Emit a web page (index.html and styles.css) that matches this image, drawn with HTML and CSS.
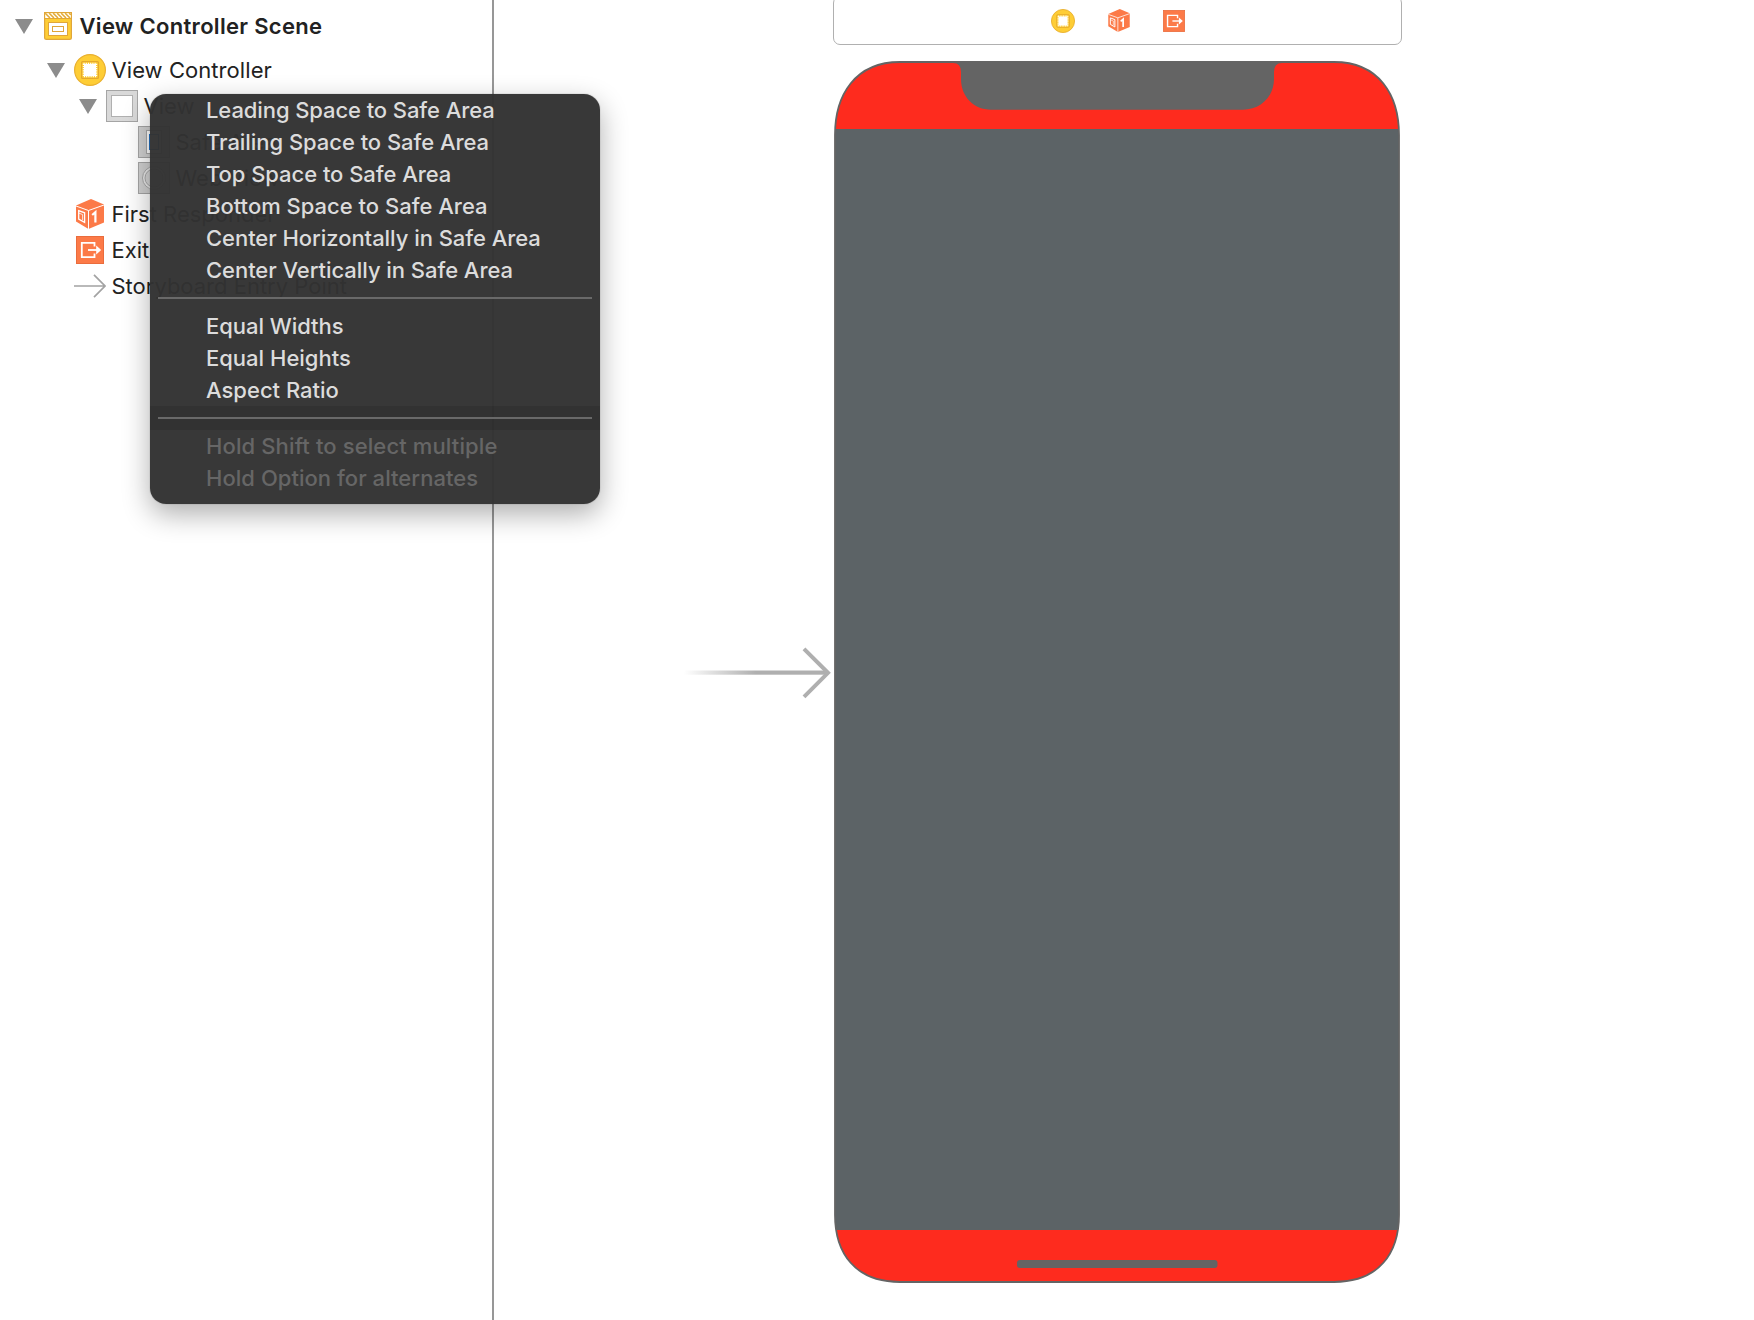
FILE: index.html
```html
<!DOCTYPE html>
<html lang="en">
<head>
<meta charset="utf-8">
<title>View Controller Scene</title>
<link rel="stylesheet" href="styles.css">
</head>
<body>
<svg class="defs" width="0" height="0" aria-hidden="true">
  <symbol id="triangle" viewBox="0 0 18 15"><path d="M0 0H18L9 15Z" fill="#8c8c8c"/></symbol>
  <symbol id="controller" viewBox="0 0 32 32">
    <circle cx="16" cy="16" r="15.4" fill="#fecd35" stroke="#e9b030" stroke-width="1.2"/>
    <rect x="7.6" y="7.6" width="16.8" height="16.8" rx="1" fill="#fecd35" stroke="#e5a92c" stroke-width="1.2"/>
    <rect x="10" y="10" width="12" height="12" fill="#fff"/>
    <rect x="9.5" y="9.5" width="13" height="13" fill="none" stroke="#fff" stroke-width="1.4" stroke-dasharray="1.2 1"/>
  </symbol>
  <symbol id="responder" viewBox="0 0 28 30">
    <path d="M15 0L28 5.5V23.5L12.5 30L0 22.5V6.5Z" fill="#fc7a48"/>
    <path d="M0 7L12.5 11.5L28 6M12.5 11.5V30" fill="none" stroke="#fff" stroke-width="1"/>
    <path d="M2.7 11.6L8.6 13.8V23.4L2.7 20Z" fill="none" stroke="#fff" stroke-width="1.3"/>
    <path d="M2.7 14L6.6 15.6V21" fill="none" stroke="#fff" stroke-width=".8"/>
    <path d="M16.2 16L19.4 13.2V23.5" fill="none" stroke="#fff" stroke-width="2.2"/>
  </symbol>
  <symbol id="exit" viewBox="0 0 28 28">
    <rect x=".5" y=".5" width="27" height="27" fill="#fc7a48" stroke="#ea6c3d"/>
    <path d="M18.5 10.5V6.8H5.8V21.2H18.5V17.5" fill="none" stroke="#fff" stroke-width="1.8"/>
    <path d="M12 14H21" stroke="#fff" stroke-width="1.8"/>
    <path d="M20.2 9.5L25.2 14L20.2 18.5Z" fill="#fff"/>
  </symbol>
</svg>
<div class="editor">
  <aside class="outline">
    <div class="row scene">
      <svg class="tri"><use href="#triangle"/></svg>
      <svg class="icon-scene" viewBox="0 0 28 28">
        <path d="M.6 .6H27.4V25.5Q27.4 27.4 25.5 27.4H2.5Q.6 27.4 .6 25.5Z" fill="#fecd35" stroke="#e0a63a" stroke-width="1.2"/>
        <path d="M1.2 1.2H26.8V6H1.2Z" fill="#fff"/>
        <path d="M1.2 1.2L6 6M5.2 1.2L10 6M9.2 1.2L14 6M13.2 1.2L18 6M17.2 1.2L22 6M21.2 1.2L26 6M25.2 1.2L26.8 2.8" stroke="#e3aa35" stroke-width="1.6"/>
        <path d="M.6 6.5H27.4" stroke="#e0a63a" stroke-width="1"/>
        <rect x="4.5" y="10.5" width="19" height="13" fill="#fff" stroke="#e0a63a"/>
        <rect x="8.5" y="14.5" width="11" height="5" fill="#fff" stroke="#e0a63a"/>
      </svg>
      <span class="label">View Controller Scene</span>
    </div>
    <div class="row level-1">
      <svg class="tri"><use href="#triangle"/></svg>
      <svg class="icon"><use href="#controller"/></svg>
      <span class="label">View Controller</span>
    </div>
    <div class="row level-2">
      <svg class="tri"><use href="#triangle"/></svg>
      <svg class="icon" viewBox="0 0 32 32"><rect x=".5" y=".5" width="31" height="31" fill="#d9d9d9" stroke="#a5a5a5"/><rect x="5.5" y="5.5" width="21" height="21" fill="#fff" stroke="#b0b0b0"/></svg>
      <span class="label">View</span>
    </div>
    <div class="row level-3">
      <svg class="icon" viewBox="0 0 32 32"><rect x=".5" y=".5" width="31" height="31" fill="#d0d0d0" stroke="#a5a5a5"/><rect x="8.5" y="4.5" width="15" height="23" fill="#fff" stroke="#a8a8a8"/><rect x="11.5" y="8.5" width="9" height="15" fill="#fff" stroke="#2474c8"/></svg>
      <span class="label">Safe Area</span>
    </div>
    <div class="row level-3">
      <svg class="icon" viewBox="0 0 32 32"><rect x=".5" y=".5" width="31" height="31" fill="#d0d0d0" stroke="#a5a5a5"/><circle cx="16" cy="16" r="11.5" fill="#e8e8e8" stroke="#a8a8a8"/><circle cx="16" cy="16" r="9" fill="#d4d4d4" stroke="#a8a8a8"/></svg>
      <span class="label">Web View</span>
    </div>
    <div class="row level-1b">
      <svg class="icon-cube"><use href="#responder"/></svg>
      <span class="label">First Responder</span>
    </div>
    <div class="row level-1b">
      <svg class="icon-exit"><use href="#exit"/></svg>
      <span class="label">Exit</span>
    </div>
    <div class="row entry">
      <svg class="icon" viewBox="0 0 32 32"><path d="M0 16H30.5M20 4.8L31 16L20 27.2" fill="none" stroke="#a3a3a3" stroke-width="1.7"/></svg>
      <span class="label">Storyboard Entry Point</span>
    </div>
  </aside>
  <main class="canvas">
    <svg class="initial-arrow" viewBox="0 0 150 52">
      <defs><linearGradient id="fade"><stop offset="0" stop-color="#afafaf" stop-opacity="0"/><stop offset=".5" stop-color="#afafaf"/></linearGradient></defs>
      <rect x="0" y="23.5" width="144" height="4.2" fill="url(#fade)"/>
      <path d="M120 1.8L144 25.8L120 49.8" fill="none" stroke="#afafaf" stroke-width="4"/>
    </svg>
    <div class="controller">
      <div class="dock">
        <svg class="dock-circle"><use href="#controller"/></svg>
        <svg class="dock-cube"><use href="#responder"/></svg>
        <svg class="dock-exit"><use href="#exit"/></svg>
      </div>
      <svg class="phone" viewBox="0 0 566 1222">
        <defs><clipPath id="body"><path id="shape" d="M66 1H500C545 1 565 34 565 74V1154C565 1192 545 1221 500 1221H66C21 1221 1 1192 1 1154V74C1 34 21 1 66 1Z"/></clipPath></defs>
        <g clip-path="url(#body)">
          <rect width="566" height="1222" fill="#fe2b1e"/>
          <rect y="68" width="566" height="1101" fill="#5c6366"/>
          <path d="M119 0V2Q127 2 127 11V18C127 36 140 48.7 157 48.7H409C426 48.7 440 36 440 18V11Q440 2 448 2V0Z" fill="#646464"/>
        </g>
        <use href="#shape" fill="none" stroke="#646464" stroke-width="1.8"/>
        <rect x="183" y="1199" width="200.5" height="8" rx="3" fill="#646464"/>
      </svg>
    </div>
  </main>
</div>
<div class="menu">
  <div class="item tight">Leading Space to Safe Area</div>
  <div class="item snug">Trailing Space to Safe Area</div>
  <div class="item snug">Top Space to Safe Area</div>
  <div class="item">Bottom Space to Safe Area</div>
  <div class="item snug">Center Horizontally in Safe Area</div>
  <div class="item snug">Center Vertically in Safe Area</div>
  <div class="separator"></div>
  <div class="item snug">Equal Widths</div>
  <div class="item">Equal Heights</div>
  <div class="item">Aspect Ratio</div>
  <div class="separator dark"></div>
  <div class="item hint">Hold Shift to select multiple</div>
  <div class="item hint last">Hold Option for alternates</div>
</div>
</body>
</html>
```
FILE: styles.css
```css
* { box-sizing: border-box; }
body {
  margin: 0;
  background: #fff;
  font-family: Inter, "Liberation Sans", sans-serif;
  font-size: 22px;
  color: #222;
}
svg { display: block; flex: none; }
.defs { position: absolute; }
.editor { display: flex; height: 1320px; overflow: hidden; }
.outline {
  width: 494px;
  flex: none;
  border-right: 2px solid #979797;
}
.row {
  display: flex;
  align-items: center;
  height: 36px;
  white-space: nowrap;
}
.scene { height: 52px; padding-left: 15px; font-weight: 600; letter-spacing: .31px; }
.level-1 { padding-left: 47px; letter-spacing: .06px; }
.level-2 { padding-left: 79px; }
.level-3 { padding-left: 138px; }
.level-1b { padding-left: 76px; }
.entry { padding-left: 74px; }
.tri { width: 18px; height: 15px; }
.icon { width: 32px; height: 32px; margin-right: 5.5px; }
.tri + .icon { margin-left: 9px; }
.icon-scene { width: 28px; height: 28px; margin: 0 7.5px 0 11px; }
.icon-cube { width: 28px; height: 30px; margin-right: 7.5px; }
.icon-exit { width: 28px; height: 28px; margin-right: 7.5px; }
.label { line-height: 36px; }
.canvas { display: flex; flex: 1; padding-left: 190px; }
.initial-arrow { width: 150px; height: 52px; margin-top: 647px; }
.controller { width: 570px; margin-left: -1px; }
.dock {
  display: flex;
  align-items: center;
  justify-content: center;
  gap: 33px;
  width: 568.5px;
  height: 49px;
  margin-top: -4px;
  padding-left: 2px;
  border: 1.5px solid #b0b0b0;
  border-radius: 7px;
}
.dock-circle { width: 24px; height: 24px; }
.dock-cube { width: 22px; height: 23px; }
.dock-exit { width: 22px; height: 22px; }
.phone { width: 566px; height: 1222px; margin: 16px 0 0 1px; }
.menu {
  position: absolute;
  left: 150px;
  top: 94px;
  width: 450px;
  height: 410px;
  border-radius: 16px;
  overflow: hidden;
  background: rgba(50, 50, 50, .97);
  box-shadow: 0 0 1px rgba(0, 0, 0, .5), 0 10px 28px rgba(0, 0, 0, .32);
}
.item {
  height: 32px;
  padding-left: 56px;
  line-height: 32px;
  font-weight: 500;
  color: #dcdcdc;
  white-space: nowrap;
}
.tight { letter-spacing: -.09px; }
.snug { letter-spacing: -.05px; }
.hint { color: #666; letter-spacing: .12px; }
.last { letter-spacing: .04px; }
.separator { height: 24px; padding: 11px 8px; }
.separator::before { content: ""; display: block; height: 2px; background: #696969; }
.dark { background: rgba(0, 0, 0, .1); }
```
